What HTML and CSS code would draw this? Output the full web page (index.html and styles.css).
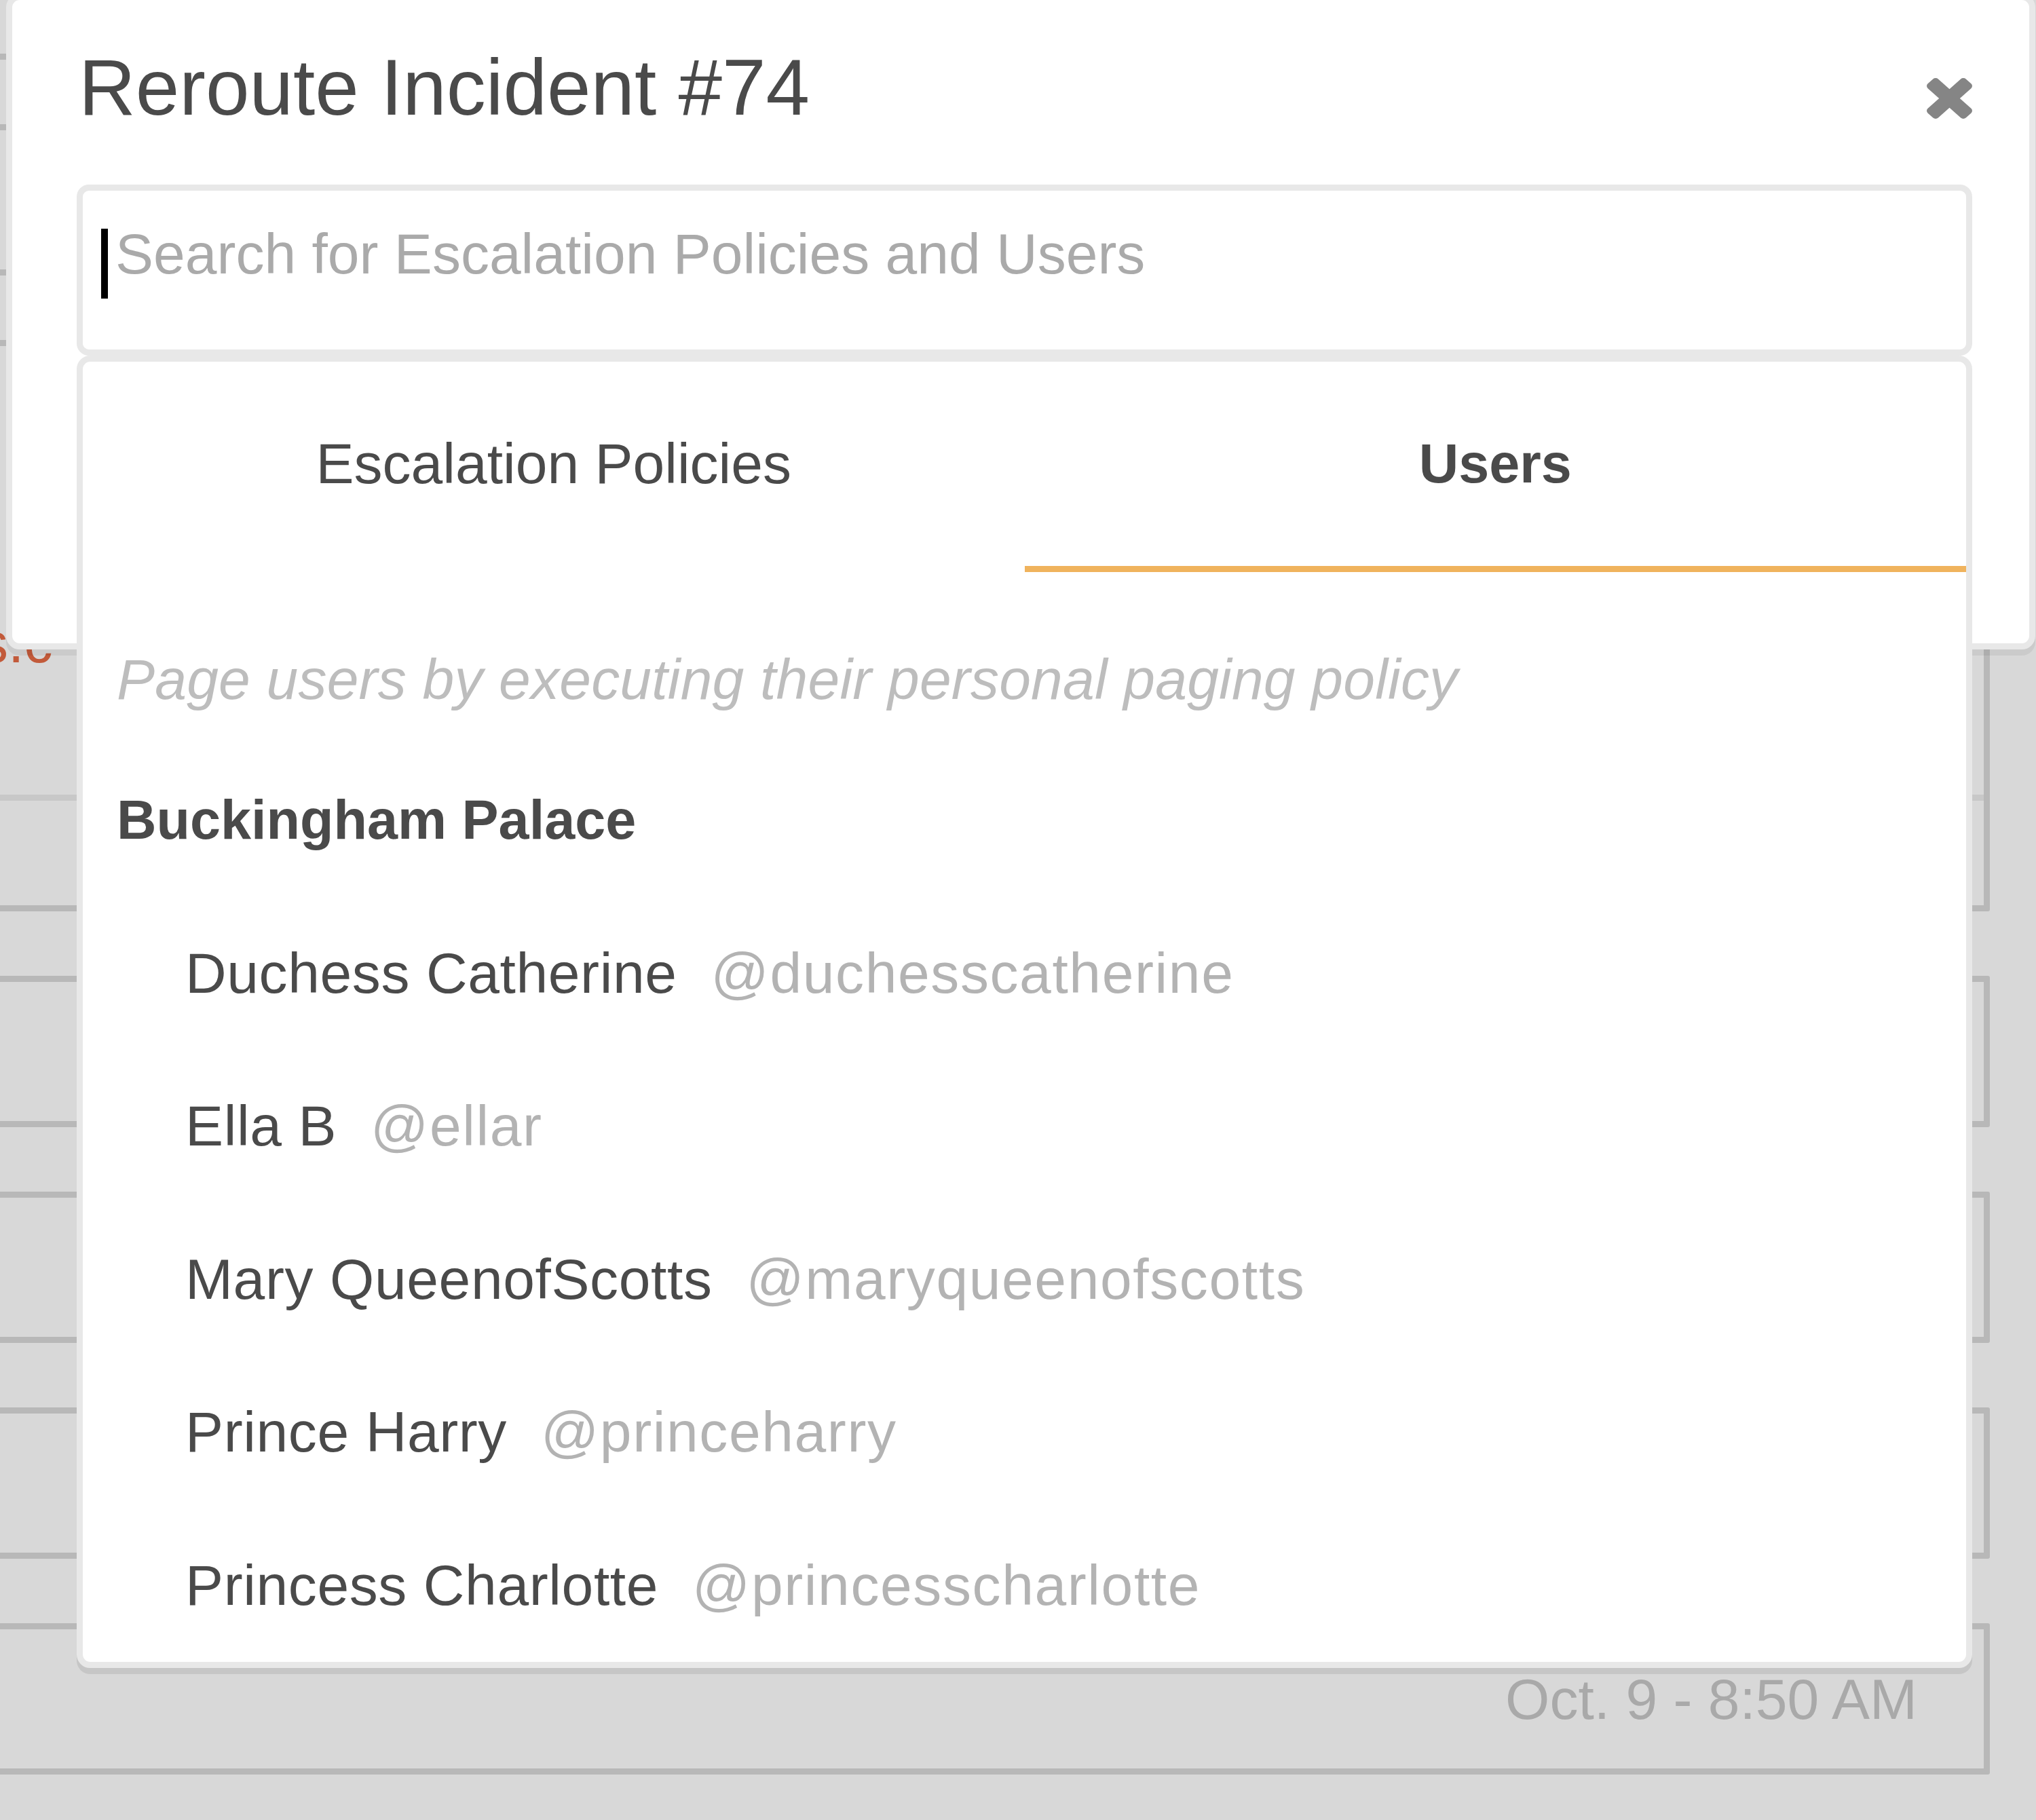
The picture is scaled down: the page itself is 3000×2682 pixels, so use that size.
FILE: index.html
```html
<!DOCTYPE html>
<html lang="en">
<head>
<meta charset="utf-8">
<title>Reroute Incident #74</title>
<link rel="stylesheet" href="styles.css">
</head>
<body>
<div class="page">
  <div class="incident-list">
    <div class="card card-cut"></div>
    <div class="card"></div>
    <div class="card card-tall">
      <div class="card-link">status.c</div>
      <div class="card-divider"></div>
    </div>
    <div class="card"></div>
    <div class="card"></div>
    <div class="card"></div>
    <div class="card card-last"><div class="card-time">Oct. 9 - 8:50 AM</div></div>
  </div>

  <div class="modal">
    <div class="modal-header">
      <h1 class="modal-title">Reroute Incident #74</h1>
      <button class="modal-close" aria-label="Close">
        <svg viewBox="110 366 1188 1188" preserveAspectRatio="none" width="67" height="60"><path fill="#858585" d="M1298 1322q0 40-28 68l-136 136q-28 28-68 28t-68-28l-294-294-294 294q-28 28-68 28t-68-28l-136-136q-28-28-28-68t28-68l294-294-294-294q-28-28-28-68t28-68l136-136q28-28 68-28t68 28l294 294 294-294q28-28 68-28t68 28l136 136q28 28 28 68t-28 68l-294 294 294 294q28 28 28 68z"/></svg>
      </button>
    </div>
    <div class="search">
      <div class="search-input"><span class="caret"></span><span class="placeholder">Search for Escalation Policies and Users</span></div>
      <div class="dropdown">
        <div class="tabs">
          <div class="tab">Escalation Policies</div>
          <div class="tab tab-active">Users</div>
        </div>
        <p class="hint">Page users by executing their personal paging policy</p>
        <div class="group">Buckingham Palace</div>
        <ul class="users">
          <li class="user"><span class="user-name">Duchess Catherine</span><span class="user-handle">@duchesscatherine</span></li>
          <li class="user"><span class="user-name">Ella B</span><span class="user-handle">@ellar</span></li>
          <li class="user"><span class="user-name">Mary QueenofScotts</span><span class="user-handle">@maryqueenofscotts</span></li>
          <li class="user"><span class="user-name">Prince Harry</span><span class="user-handle">@princeharry</span></li>
          <li class="user"><span class="user-name">Princess Charlotte</span><span class="user-handle">@princesscharlotte</span></li>
        </ul>
      </div>
    </div>
  </div>
</div>
</body>
</html>
```

FILE: styles.css
```css
html, body {
  margin: 0;
  padding: 0;
}

body {
  background: #d8d8d8;
  font-family: "Liberation Sans", Arial, sans-serif;
  color: #4a4a4a;
}

.page {
  position: relative;
  width: 3000px;
  height: 2682px;
  overflow: hidden;
}

/* dimmed page behind the modal */
.incident-list {
  display: flex;
  flex-direction: column;
  gap: 95px;
  margin-left: -20px;
  width: 2952px;
}

.card {
  box-sizing: border-box;
  height: 223px;
  border: 9px solid #b8b8b8;
  border-radius: 3px;
}

.card-cut {
  height: 88px;
  border-top: none;
}

.card-tall {
  height: 842px;
}

.card-link {
  margin: 395px 0 0 -201px;
  font-size: 84px;
  line-height: 84px;
  color: #c25a3a;
  white-space: nowrap;
}

.card-divider {
  margin-top: 182px;
  height: 9px;
  background: #c8c8c8;
}

.card-time {
  padding: 61px 98px 0 0;
  text-align: right;
  font-size: 84px;
  line-height: 84px;
  color: #a9a9a9;
}

/* modal */
.modal {
  position: absolute;
  left: 9px;
  top: -9px;
  width: 2990px;
  height: 966px;
  box-sizing: border-box;
  background: #fff;
  border: 9px solid #e8e8e8;
  border-radius: 20px;
  padding: 73px 84px 0 95px;
  box-shadow: 0 9px 0 rgba(0, 0, 0, 0.06);
}

.modal-header {
  display: flex;
  justify-content: space-between;
  align-items: flex-start;
}

.modal-title {
  margin: 0 0 0 3px;
  font-size: 116px;
  line-height: 112px;
  font-weight: 400;
  color: #4a4a4a;
}

.modal-close {
  margin: 42px 0 0;
  padding: 0;
  border: 0;
  background: none;
  width: 67px;
  height: 60px;
  display: block;
}

.modal-close svg {
  display: block;
}

.search {
  position: relative;
  margin-top: 87px;
}

.search-input {
  box-sizing: border-box;
  height: 252px;
  border: 9px solid #e8e8e8;
  border-radius: 18px;
  background: #fff;
  display: flex;
  align-items: flex-start;
  padding: 51px 0 0 27px;
}

.caret {
  width: 10px;
  height: 103px;
  margin-top: 5px;
  background: #000;
}

.placeholder {
  margin-left: 11px;
  font-size: 84px;
  line-height: 84px;
  color: #aaaaaa;
  white-space: nowrap;
}

/* dropdown menu */
.dropdown {
  position: absolute;
  left: 0;
  right: 0;
  top: 100%;
  box-sizing: border-box;
  background: #fff;
  border: 9px solid #e8e8e8;
  border-radius: 20px;
  box-shadow: 0 9px 0 #c6c6c6;
}

.tabs {
  display: grid;
  grid-template-columns: 1fr 1fr;
}

.tab {
  text-align: center;
  font-size: 84px;
  line-height: 84px;
  padding: 108px 0 109px;
  border-bottom: 9px solid transparent;
  color: #4a4a4a;
}

.tab-active {
  font-weight: 700;
  font-size: 81px;
  border-bottom-color: #f0b35d;
}

.hint {
  margin: 116px 0 0;
  padding-left: 50px;
  font-style: italic;
  font-size: 84px;
  line-height: 84px;
  letter-spacing: 0.2px;
  color: #bdbdbd;
}

.group {
  margin-top: 123px;
  padding-left: 50px;
  font-weight: 700;
  font-size: 81px;
  line-height: 84px;
  color: #4a4a4a;
}

.users {
  list-style: none;
  margin: 71px 0 0;
  padding: 0 0 0 151px;
}

.user {
  display: flex;
  gap: 50px;
  padding: 70.75px 0;
  font-size: 84px;
  line-height: 84px;
}

.user-name {
  color: #4a4a4a;
  letter-spacing: 0.6px;
}

.user-handle {
  color: #b3b3b3;
  letter-spacing: 1.6px;
}
```
